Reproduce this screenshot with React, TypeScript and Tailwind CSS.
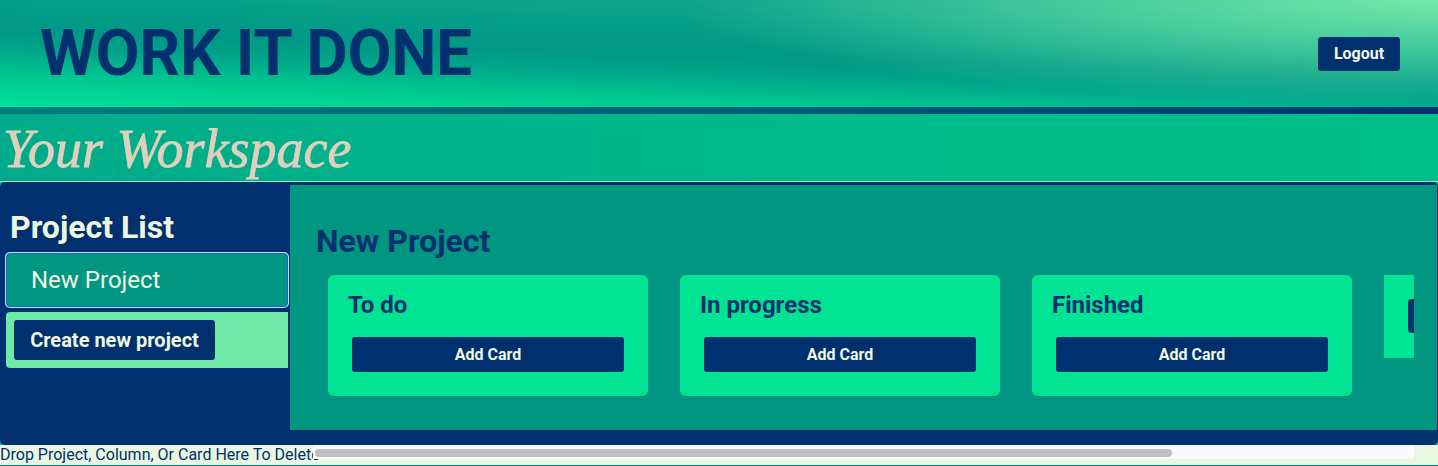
const columns = ['To do', 'In progress', 'Finished'];

export default function App() {
  return (
    <div className="relative w-[1438px] h-[466px] overflow-hidden font-['Roboto',sans-serif] bg-[#00b88a]">
      <header className="h-[107px] flex items-center justify-between pl-[40px] pr-[38px] bg-[radial-gradient(ellipse_760px_105px_at_100%_0%,rgba(118,236,170,0.95)_0%,rgba(118,236,170,0.45)_55%,rgba(118,236,170,0)_100%),linear-gradient(182deg,#18a88e_0%,#06a08a_30%,#009886_50%,#00a28a_62%,#00c88f_80%,#00e296_100%)]">
        <h1 className="text-[64px] font-bold text-[#00306e] leading-[75px] tracking-[-0.4px]">WORK IT DONE</h1>
        <button className="w-[82px] h-[34px] rounded-[3px] bg-[#00306e] text-[16px] font-bold text-[#f4f8ec]">
          Logout
        </button>
      </header>
      <div className="h-[7px] bg-[linear-gradient(90deg,#007e7c_0%,#005a78_55%,#003070_100%)]" />

      <div className="h-[67px] flex items-center pl-[3px] bg-[linear-gradient(90deg,#00aa8a_0%,#00bc8a_60%,#00be8a_100%)]">
        <h2 className="text-[54px] italic text-[#dfd0bd] font-['Liberation_Serif',serif] leading-none pt-[2px] [-webkit-text-stroke:0.8px_#dfd0bd]">
          Your Workspace
        </h2>
      </div>
      <div className="h-px bg-[#a6dcc4]" />

      <main className="h-[263px] flex bg-[#00306e] rounded-[5px]">
        <aside className="w-[290px] shrink-0 flex flex-col pt-[26px]">
          <h3 className="pl-[10px] text-[32px] font-bold text-[#eef8e0] leading-[38px]">Project List</h3>
          <div className="mt-[7px] ml-[6px] mr-[2px] h-[54px] flex items-center pl-[24px] rounded-[4px] bg-[#009682] border border-[#1d5fd6] ring-1 ring-[#c4e2f2]">
            <span className="text-[24px] text-[#eef8e0]">New Project</span>
          </div>
          <div className="mt-[5px] ml-[6px] mr-[2px] h-[56px] flex items-center pl-[8px] rounded-l-[4px] bg-[#70e8a8]">
            <button className="w-[201px] h-[40px] rounded-[3px] bg-[#00306e] text-[20px] font-bold text-[#eef8e0]">
              Create new project
            </button>
          </div>
        </aside>

        <section className="flex-1 mt-[3px] mr-px h-[245px] bg-[#009682] flex flex-col">
          <h3 className="pl-[26px] pt-[37px] text-[32px] font-bold text-[#00306e] leading-[38px]">New Project</h3>
          <div className="mt-[15px] ml-[23px] w-[1101px] overflow-hidden flex gap-[32px] pl-[15px]">
            {columns.map((c) => (
              <div key={c} className="shrink-0 w-[320px] h-[121px] rounded-[6px] bg-[#00e494] pt-[16px]">
                <h4 className="pl-[20px] text-[24px] font-bold text-[#00306e] leading-[28px]">{c}</h4>
                <button className="mt-[18px] ml-[24px] w-[272px] h-[35px] rounded-[3px] bg-[#00306e] text-[16px] font-bold text-[#eef8e0]">
                  Add Card
                </button>
              </div>
            ))}
            <div className="shrink-0 w-[200px] h-[83px] bg-[#00e494] pt-[24px] pl-[24px]">
              <div className="w-[160px] h-[34px] rounded-[4px] bg-[#00306e]" />
            </div>
          </div>
        </section>
      </main>

      <div className="h-[21px] bg-[#eaf7e0] border-b border-[#007a78] text-[16px] text-[#00306e] leading-[20px] whitespace-nowrap">
        Drop Project, Column, Or Card Here To Delete
      </div>

      <div className="absolute left-[313px] top-[445px] w-[1101px] h-[14px] bg-[#fafafa]">
        <div className="absolute left-[2px] top-[4px] w-[857px] h-[8px] rounded-full bg-[#c0c0c0]" />
      </div>
    </div>
  );
}
